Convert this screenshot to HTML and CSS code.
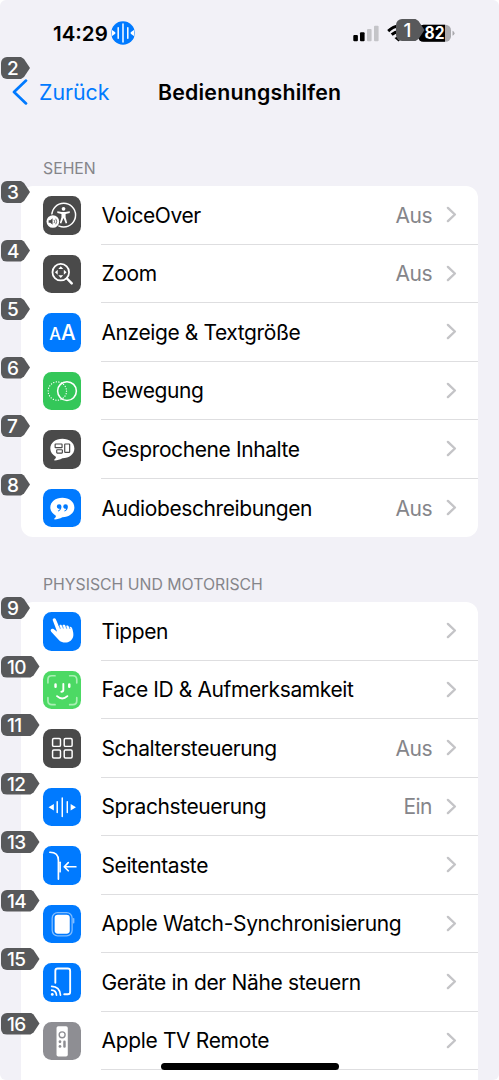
FILE: index.html
```html
<!DOCTYPE html>
<html lang="de">
<head>
<meta charset="utf-8">
<title>Bedienungshilfen</title>
<link rel="stylesheet" href="styles.css">
</head>
<body>
<svg class="defs" aria-hidden="true">
  <symbol id="chevron" viewBox="0 0 11 17"><path d="M1.9 1.9 8.9 8.5 1.9 15.1" fill="none" stroke="#c4c4c7" stroke-width="2.4" stroke-linecap="round" stroke-linejoin="round"/></symbol>
</svg>
<div class="screen">
  <header class="status">
    <div class="clock">14:29</div>
    <svg class="voice" viewBox="0 0 24 24"><circle cx="12" cy="12" r="11.8" fill="#007aff"/><g stroke="#fff" stroke-width="1.5" stroke-linecap="round"><path d="M7.2 6.800v10.400M12 3v18M16.800 6.800v10.400"/></g><path d="M.7 8.800v6.400L4.300 12.800v-1.600zM23.300 8.800v6.400L19.700 12.800v-1.600z" fill="#fff"/></svg>
    <svg class="signals" viewBox="0 0 104 24"><g fill="#000"><rect x="1.3" y="15" width="4.6" height="6.3" rx="1"/><rect x="8" y="12.3" width="4.6" height="9" rx="1"/></g><g fill="#c4c4c8"><rect x="15" y="9" width="4.6" height="12.3" rx="1"/><rect x="22" y="5.7" width="4.6" height="15.6" rx="1"/></g>
      <g fill="none" stroke="#000" stroke-width="2.9"><path d="M36.2 11.1Q46.500 1.500 57 11.1"/><path d="M39.700 14.600Q46.500 8.700 53 14.600"/></g><path d="M42.500 18 46.500 21.500 50 18Q46.500 15 42.500 18z"/>
      <path d="M71.500 4.700H93.500A5.500 5.500 0 0 1 99 10.200V16.300A5.500 5.500 0 0 1 93.500 21.800H71.500A5.500 5.500 0 0 1 66 16.300V10.200A5.500 5.500 0 0 1 71.500 4.700z" fill="#a9a9ad"/><path d="M71.500 4.700H93V21.800H71.500A5.500 5.500 0 0 1 66 16.300V10.200A5.500 5.500 0 0 1 71.500 4.700z"/><path d="M100.500 10.800Q102.500 11.500 102.500 13.200T100.500 15.800z" fill="#a9a9ad"/><text class="battery" x="72.500" y="19.200" textLength="20" lengthAdjust="spacingAndGlyphs">82</text></svg>
    <span class="tag tag-status">1</span>
  </header>
  <nav class="navbar">
    <span class="tag tag-back">2</span>
    <svg class="back" viewBox="0 0 16 26"><path d="M14 1.600 2 13 14 24.400" fill="none" stroke="#007aff" stroke-width="2.700" stroke-linecap="round" stroke-linejoin="round"/></svg>
    <span class="back-label">Zurück</span>
    <h1>Bedienungshilfen</h1>
  </nav>
  <main>
    <h2 class="first">SEHEN</h2>
    <section class="card">
      <div class="row"><span class="tag">3</span>
        <svg class="icon dark" viewBox="0 0 39 39"><circle cx="21" cy="19.300" r="12" fill="none" stroke="#fff" stroke-width="1.500"/><circle cx="20.800" cy="13" r="1.900" fill="#fff"/><path d="M14.500 15.500 19 16.200H22.600L27.100 15.500V17.200L22.900 18.200V21.500L24.500 27.300 23 27.900 20.900 22.500H20.600L18.500 27.900 17 27.300 18.700 21.500V18.200L14.500 17.200z" fill="#fff"/><circle cx="10" cy="25.800" r="7.200" fill="#4a4a4a"/><circle cx="10" cy="25.800" r="6.400" fill="#fff"/><path d="M5.700 24.500H7.400L9.700 22.500V29L7.400 27.200H5.700z" fill="#4a4a4a"/><path d="M11.200 24.200Q12.200 25.800 11.200 27.500M12.900 23Q14.800 25.800 12.900 28.600" fill="none" stroke="#4a4a4a" stroke-width=".8"/></svg>
        <div class="content"><span class="label">VoiceOver</span><span class="value">Aus</span><svg class="chev"><use href="#chevron"/></svg></div></div>
      <div class="row"><span class="tag">4</span>
        <svg class="icon dark" viewBox="0 0 39 39"><circle cx="18" cy="17.400" r="8.400" fill="none" stroke="#fff" stroke-width="1.800"/><path d="M24.300 23.800 29.100 28.800" stroke="#fff" stroke-width="2.500" stroke-linecap="round"/><path d="M18 11.500 20.500 14.300H15.500zM18 23.300 20.500 20.500H15.500zM12.100 17.400 14.900 14.900V19.900zM23.900 17.400 21.100 14.900V19.900z" fill="#fff"/></svg>
        <div class="content"><span class="label">Zoom</span><span class="value">Aus</span><svg class="chev"><use href="#chevron"/></svg></div></div>
      <div class="row"><span class="tag">5</span>
        <svg class="icon blue" viewBox="0 0 39 39"><text class="letter" x="6.300" y="27.300" font-size="17" textLength="11.900" lengthAdjust="spacingAndGlyphs">A</text><text class="letter" x="18.200" y="27.300" font-size="21.800" textLength="14.800" lengthAdjust="spacingAndGlyphs">A</text></svg>
        <div class="content"><span class="label">Anzeige &amp; Textgröße</span><svg class="chev"><use href="#chevron"/></svg></div></div>
      <div class="row"><span class="tag">6</span>
        <svg class="icon green" viewBox="0 0 39 39"><circle cx="14.500" cy="19.300" r="9.300" fill="none" stroke="#fff" stroke-width="1.300" stroke-linecap="round" stroke-dasharray=".1 2.556"/><circle cx="24.300" cy="19.300" r="9.500" fill="none" stroke="#fff" stroke-width="1.600"/></svg>
        <div class="content"><span class="label">Bewegung</span><svg class="chev"><use href="#chevron"/></svg></div></div>
      <div class="row"><span class="tag">7</span>
        <svg class="icon dark" viewBox="0 0 39 39"><path d="M19.600 8.800C26.500 8.800 31.800 13 31.800 18.700S26.500 28.600 19.600 28.600C17.200 30 14.300 30.800 12 30.900C11 30.900 11.200 30.200 12 29.500C12.900 28.700 13.200 27.900 13 27C9.500 25 7.400 22.200 7.400 18.700C7.400 13 12.700 8.800 19.600 8.800z" fill="#fff"/><g fill="none" stroke="#4a4a4a" stroke-width="1.200"><rect x="12.300" y="14.200" width="7" height="3.700" rx=".5"/><rect x="13.900" y="20" width="5.700" height="3.400" rx=".5"/><rect x="22" y="14.200" width="5" height="8.500" rx=".5"/></g></svg>
        <div class="content"><span class="label">Gesprochene Inhalte</span><svg class="chev"><use href="#chevron"/></svg></div></div>
      <div class="row"><span class="tag">8</span>
        <svg class="icon blue" viewBox="0 0 39 39"><path d="M19.600 8.800C26.500 8.800 31.800 13 31.800 18.700S26.500 28.600 19.600 28.600C17.200 30 14.300 30.800 12 30.900C11 30.900 11.200 30.200 12 29.500C12.900 28.700 13.200 27.900 13 27C9.500 25 7.400 22.200 7.400 18.700C7.400 13 12.700 8.800 19.600 8.800z" fill="#fff"/><path d="M14 17.700A2.300 2.300 0 1 1 18.700 17.700C18.700 20.300 17.300 22.300 15.300 22.700L15 22C16.200 21.500 16.900 20.900 16.900 20A2.300 2.300 0 0 1 14 17.700zM20.500 17.700A2.300 2.300 0 1 1 25.200 17.700C25.200 20.300 23.800 22.300 21.800 22.700L21.500 22C22.700 21.500 23.400 20.900 23.400 20A2.300 2.300 0 0 1 20.500 17.700z" fill="#007aff"/></svg>
        <div class="content"><span class="label">Audiobeschreibungen</span><span class="value">Aus</span><svg class="chev"><use href="#chevron"/></svg></div></div>
    </section>
    <h2>PHYSISCH UND MOTORISCH</h2>
    <section class="card open">
      <div class="row"><span class="tag">9</span>
        <svg class="icon blue" viewBox="0 0 39 39"><path d="M9.900 8.300C9.300 6.300 12.200 5.400 13 7.300L16.200 14.600C16.300 12.700 18.700 12.400 19.400 14.300C19.900 12.600 22.400 12.600 23 14.400C23.600 13.100 26 13.300 26.600 15.200C28 14.400 29.300 15.400 29.600 16.800C31.300 22 31.500 26.500 28 29C24.500 31.700 19.800 31.600 16.500 28.800L8.300 20C6.700 17.800 8.900 16.200 10.700 17.300L14.300 20z" fill="#fff"/><path d="M16.300 13.500 17.400 16.600M19.600 13.800 20.500 16.300M23.100 14 23.900 16.500M26.600 14.800 27.200 16.800" stroke="#007aff" stroke-width=".7" stroke-linecap="round"/></svg>
        <div class="content"><span class="label">Tippen</span><svg class="chev"><use href="#chevron"/></svg></div></div>
      <div class="row"><span class="tag wide">10</span>
        <svg class="icon lime" viewBox="0 0 39 39"><g fill="none" stroke-linecap="round"><path d="M5 12V8.700Q5 4.800 8.900 4.800H12.200M27 4.800H30.300Q34.200 4.800 34.200 8.700V12M34.200 27V30.200Q34.200 34.100 30.300 34.100H27M12.200 34.100H8.900Q5 34.100 5 30.200V27" stroke="#aaf0b5" stroke-width="1.700"/><path d="M12.700 13.700V15.900M26.600 13.700V15.900" stroke="#fff" stroke-width="2.500"/><path d="M20.600 13V19.300Q20.600 21 18.600 21M14.200 25.500Q19.500 30.200 24.700 25.500" stroke="#fff" stroke-width="1.900"/></g></svg>
        <div class="content"><span class="label">Face ID &amp; Aufmerksamkeit</span><svg class="chev"><use href="#chevron"/></svg></div></div>
      <div class="row"><span class="tag wide">11</span>
        <svg class="icon dark" viewBox="0 0 39 39"><g fill="none" stroke="#fff" stroke-width="1.500"><rect x="9.700" y="9.600" width="8" height="8" rx="1.200"/><rect x="21.500" y="9.600" width="8" height="8" rx="1.200"/><rect x="9.700" y="21.300" width="8" height="8" rx="1.200"/><rect x="21.500" y="21.300" width="8" height="8" rx="1.200"/></g></svg>
        <div class="content"><span class="label">Schaltersteuerung</span><span class="value">Aus</span><svg class="chev"><use href="#chevron"/></svg></div></div>
      <div class="row"><span class="tag wide">12</span>
        <svg class="icon blue" viewBox="0 0 39 39"><path d="M14.400 14V24.800M19.500 10.200V28.800M24.600 14V24.800" stroke="#fff" stroke-width="1.500" stroke-linecap="round"/><path d="M5.600 19.500 11 16.300V22.700zM33.400 19.500 28 16.300V22.700z" fill="#fff"/></svg>
        <div class="content"><span class="label">Sprachsteuerung</span><span class="value">Ein</span><svg class="chev"><use href="#chevron"/></svg></div></div>
      <div class="row"><span class="tag wide">13</span>
        <svg class="icon blue" viewBox="0 0 39 39"><g fill="none" stroke="#fff" stroke-width="1.700" stroke-linecap="round" stroke-linejoin="round"><path d="M7 6.300C13 6.300 15.600 9 15.600 14.500V33.500"/><path d="M17.300 16.500V26"/><path d="M33.300 21H21.600M25.600 16.900 21.500 21 25.600 25.100"/></g></svg>
        <div class="content"><span class="label">Seitentaste</span><svg class="chev"><use href="#chevron"/></svg></div></div>
      <div class="row"><span class="tag wide">14</span>
        <svg class="icon blue" viewBox="0 0 39 39"><rect x="9.300" y="7.800" width="20.200" height="23.400" rx="5.500" fill="none" stroke="#80bdff" stroke-width="1.300"/><rect x="11.800" y="10" width="15.300" height="19" rx="3.200" fill="#fff"/><path d="M31 14V18" stroke="#80bdff" stroke-width="1.600" stroke-linecap="round"/></svg>
        <div class="content"><span class="label long">Apple Watch-Synchronisierung</span><svg class="chev"><use href="#chevron"/></svg></div></div>
      <div class="row"><span class="tag wide">15</span>
        <svg class="icon blue" viewBox="0 0 39 39"><g fill="none" stroke="#fff" stroke-linecap="round"><path d="M12.500 20V8Q12.500 5.600 14.900 5.600H25.100Q27.500 5.600 27.500 8V29.300Q27.500 31.700 25.100 31.700H21.500" stroke-width="1.900"/><path d="M8.800 27.500Q13.200 27.700 13.700 32.500M8.800 23.700Q17 24 17.700 32.500" stroke-width="1.700"/></g><circle cx="9.400" cy="31.800" r="1.400" fill="#fff"/></svg>
        <div class="content"><span class="label long">Geräte in der Nähe steuern</span><svg class="chev"><use href="#chevron"/></svg></div></div>
      <div class="row"><span class="tag wide tag-low">16</span>
        <svg class="icon gray" viewBox="0 0 39 39"><rect x="13.700" y="4.300" width="11.400" height="30.700" rx="1.800" fill="#fff"/><circle cx="19.400" cy="13" r="3" fill="none" stroke="#8e8e93" stroke-width="1.400"/><g fill="#8e8e93"><circle cx="17.200" cy="20" r="1.400"/><circle cx="17.200" cy="24.700" r="1.400"/><rect x="20.500" y="18.700" width="2.500" height="7.300" rx="1.200"/></g></svg>
        <div class="content"><span class="label long">Apple TV Remote</span><svg class="chev"><use href="#chevron"/></svg></div></div>
    </section>
  </main>
  <div class="home"></div>
</div>
</body>
</html>
```

FILE: styles.css
```css
* { box-sizing: border-box; }
body { margin: 0; background: #fff; color: #000; font-family: Inter, "Liberation Sans", sans-serif; }
.defs { position: absolute; width: 0; height: 0; }
.screen { position: relative; height: 1080px; overflow: hidden; background: #f2f1f7; border-radius: 6px; }
.status { position: relative; height: 57px; display: flex; align-items: flex-start; padding: 20px 43px 0 53px; }
.clock { width: 58px; font-size: 20.5px; line-height: 28px; font-weight: 600; letter-spacing: 0; white-space: nowrap; }
.voice { width: 24px; height: 24px; margin-top: .5px; }
.signals { width: 104px; height: 24px; margin-left: auto; }
.battery { font-size: 17px; font-weight: 700; fill: #fff; }
.navbar { position: relative; display: flex; align-items: center; height: 69px; padding-left: 12px; }
.back { width: 16px; height: 26px; }
.back-label { width: 119px; margin-left: 11px; color: #007aff; font-size: 21.3px; }
h1 { margin: 0; font-size: 21.3px; font-weight: 600; letter-spacing: .22px; white-space: nowrap; }
main { padding: 0 21px; }
h2 { margin: 0; padding: 38px 0 0 22px; height: 65px; font-size: 15.8px; line-height: 20px; font-weight: 400; color: #85858a; white-space: nowrap; }
h2.first { height: 60px; padding-top: 33px; }
.card { background: #fff; border-radius: 12px; }
.open { border-radius: 12px 12px 0 0; height: 500px; }
.row { position: relative; display: flex; align-items: center; height: 58.5px; padding-left: 21.5px; }
.icon { width: 38.5px; height: 38.5px; border-radius: 8.5px; flex: none; }
.dark { background: #4a4a4a; }
.blue { background: #007aff; }
.green { background: #34c759; }
.lime { background: #4cd964; }
.gray { background: #8e8e93; }
.letter { fill: #fff; font-weight: 500; }
.content { display: flex; align-items: center; flex: 1; height: 100%; margin-left: 20px; padding-right: 21.5px; border-bottom: 1px solid #dedee0; }
.card:not(.open) .row:last-child .content { border-bottom: 0; }
.label { padding: 1px 0 0 .5px; font-size: 21px; letter-spacing: -.4px; white-space: nowrap; }
.long { letter-spacing: -.34px; }
.value { margin-left: auto; padding-top: 1px; font-size: 21px; letter-spacing: -.5px; color: #85858a; }
.chev { width: 11px; height: 17px; margin-left: auto; }
.value + .chev { margin-left: 13.5px; }
.tag { position: absolute; z-index: 2; left: -20px; top: -5px; width: 29px; height: 22px; padding-left: 6px; font-size: 19px; line-height: 23px; font-weight: 500; color: #fff; background: #58595b; border-radius: 6px 0 0 6px; clip-path: polygon(0 0, calc(100% - 9px) 0, calc(100% - 6px) 2px, 100% 50%, calc(100% - 6px) 20px, calc(100% - 9px) 100%, 0 100%); }
.wide { width: 38.5px; letter-spacing: -.6px; }
.tag-status { left: 395.5px; top: 19px; padding-left: 8px; border-radius: 6px 0 0 6px; }
.tag-back { left: 1px; top: 0; }
.tag-low { top: 1px; }
.home { position: absolute; left: 160.5px; bottom: 10.5px; width: 178.5px; height: 7px; border-radius: 4px; background: #000; }
```
